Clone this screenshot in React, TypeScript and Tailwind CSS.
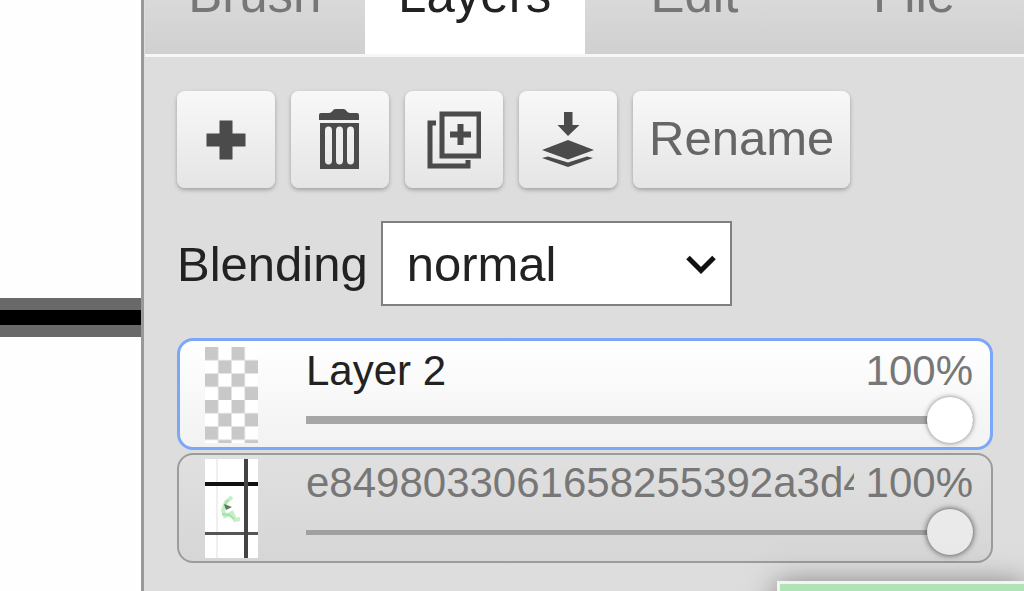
import { ReactNode, useState } from "react";

type Layer = {
  id: number;
  name: string;
  opacity: number;
  thumb: ReactNode;
}

const tabs = ["Brush", "Layers", "Edit", "File"];

const AddIcon = () => (
  <svg width="40" height="40" viewBox="0 0 40 40" fill="#4b4b4b" aria-hidden="true">
    <path d="M13.5 0.5h13v13h13v13h-13v13h-13v-13h-13v-13h13z" />
  </svg>
)

const TrashIcon = () => (
  <svg width="42" height="62" viewBox="0 0 42 62" fill="#4b4b4b" aria-hidden="true">
    <path d="M0 6q0-2 2-2h8q2 0 3.500-2q1-2 3-2h8q2 0 3 2q1.500 2 3.500 2h7q2 0 2 2v5h-40z" />
    <path fillRule="evenodd" d="M1 14h39v46h-39zM9.500 17.500q-3.500 0-3.500 4v30q0 4 3.500 4t3.500-4v-30q0-4-3.500-4zM20.500 17.500q-3.500 0-3.500 4v30q0 4 3.500 4t3.500-4v-30q0-4-3.500-4zM31.500 17.500q-3.500 0-3.500 4v30q0 4 3.500 4t3.500-4v-30q0-4-3.500-4z" />
  </svg>
)

const DuplicateIcon = () => (
  <svg width="54" height="58" viewBox="0 0 54 58" fill="none" stroke="#4b4b4b" aria-hidden="true">
    <path d="M15 3h37v42h-37z" strokeWidth="5" />
    <path d="M9 12h-6v43h38v-6" strokeWidth="5" />
    <path d="M33.500 13v21M23 23.500h21" strokeWidth="6" />
  </svg>
)

const MergeIcon = () => (
  <svg width="54" height="56" viewBox="0 0 54 56" fill="#4b4b4b" aria-hidden="true">
    <path d="M23 0h8.500v13h7l-11.500 11l-10.500-11h6.500z" />
    <path d="M27 28l26 10l-26 9.500l-26-9.500z" />
    <path d="M1 46l6-1.500l20 6l19-6l6 1.500l-25 9z" />
  </svg>
)

const EmptyThumb = () => (
  <svg width="53" height="96" viewBox="0 0 53 96" className="shrink-0" aria-hidden="true">
    <defs>
      <pattern id="checker" width="26.5" height="26.5" patternUnits="userSpaceOnUse">
        <path d="M0 0h26.500v26.500h-26.500z" fill="#fff" />
        <path d="M0 0h13.250v13.250h-13.250zM13.250 13.250h13.250v13.250h-13.250z" fill="#c8c8c8" />
      </pattern>
    </defs>
    <path d="M0 0h53v96h-53z" fill="url(#checker)" />
  </svg>
)

const DrawingThumb = () => (
  <svg width="53" height="99" viewBox="0 0 53 99" className="shrink-0" fill="none" aria-hidden="true">
    <path d="M0 0h53v99h-53z" fill="#fff" />
    <path d="M12 0v99" stroke="#efefef" strokeWidth="2" />
    <path d="M0 25h53" stroke="#111" strokeWidth="4" />
    <path d="M0 74.500h53" stroke="#555" strokeWidth="3" />
    <path d="M41 0v99" stroke="#444" strokeWidth="4" />
    <path d="M27 38l-6 5l-3 8l2 6l7-3l3 7l5-1" stroke="#c4efc8" strokeWidth="4" />
    <path d="M17 55l7 1l5 4M23 41l-4 6" stroke="#a3e2aa" strokeWidth="2" />
    <path d="M19 45l8 3l-6 3z" fill="#5d7a5e" />
  </svg>
)

const layers: Layer[] = [
  { id: 2, name: "Layer 2", opacity: 100, thumb: <EmptyThumb /> },
  { id: 1, name: "e8498033061658255392a3d4", opacity: 100, thumb: <DrawingThumb /> },
];

const ToolButton = ({ label, children }: { label: string, children: ReactNode }) => (
  <button
    aria-label={label}
    className="flex h-[97px] min-w-[98px] items-center justify-center rounded-lg bg-linear-to-b from-[#f8f8f8] to-[#e5e5e5] text-[49px] leading-[56px] text-[#666] shadow-[0_2px_4px_rgba(0,0,0,0.28)]"
  >
    {children}
  </button>
)

const LayerRow = ({ layer, active, onSelect }: { layer: Layer, active: boolean, onSelect: () => void }) => {
  const [opacity, setOpacity] = useState(layer.opacity);

  const box = active
    ? "border-3 border-[#7ba7f8] bg-linear-to-b from-white to-[#f2f2f2] pt-[6px] pb-[2px] pl-[25px] pr-[17px]"
    : "border-2 border-[#9c9c9c] bg-linear-to-b from-[#e0e0e0] to-[#d6d6d6] pt-[4px] pb-[3px] pl-[26px] pr-[18px]";
  const range = active
    ? "[&::-webkit-slider-runnable-track]:bg-[linear-gradient(#a6a6a6,#a6a6a6)] [&::-webkit-slider-runnable-track]:bg-[length:100%_8px] [&::-webkit-slider-thumb]:bg-white [&::-webkit-slider-thumb]:shadow-[0_0_5px_rgba(0,0,0,0.5)]"
    : "[&::-webkit-slider-runnable-track]:bg-[linear-gradient(#a0a0a0,#a0a0a0)] [&::-webkit-slider-runnable-track]:bg-[length:100%_5px] [&::-webkit-slider-thumb]:bg-[#eaeaea] [&::-webkit-slider-thumb]:shadow-[0_0_6px_rgba(0,0,0,0.7)]";

  return (
    <li onClick={onSelect} className={`flex items-start gap-12 rounded-2xl ${box}`}>
      {layer.thumb}
      <div className="min-w-0 flex-1">
        <div className="flex justify-between gap-3 text-[42px] leading-[48px]">
          <span className={`min-w-0 overflow-hidden whitespace-nowrap ${active ? "text-[#222]" : "text-[#777]"}`}>{layer.name}</span>
          <span className="text-[#777]">{opacity}%</span>
        </div>
        <input
          type="range"
          aria-label={`Opacity of ${layer.name}`}
          value={opacity}
          onChange={(e) => setOpacity(Number(e.target.value))}
          className={`block h-[50px] w-full appearance-none bg-transparent [&::-webkit-slider-runnable-track]:h-[46px] [&::-webkit-slider-runnable-track]:bg-center [&::-webkit-slider-runnable-track]:bg-no-repeat [&::-webkit-slider-thumb]:size-[46px] [&::-webkit-slider-thumb]:appearance-none [&::-webkit-slider-thumb]:rounded-full ${range}`}
        />
      </div>
    </li>
  );
}

const App = () => {
  const [tab, setTab] = useState("Layers");
  const [activeLayer, setActiveLayer] = useState(2);

  return (
    <div className="relative flex min-h-screen overflow-hidden bg-white font-['Liberation_Sans',Arial,sans-serif]">
      <main className="w-[141px] shrink-0 bg-[#fefefe] pt-[298px]">
        <div className="h-[39px] border-y-12 border-[#696969] bg-black"></div>
      </main>

      <aside className="min-w-0 flex-1 border-l-3 border-[#999] bg-[#ddd]">
        <nav className="-mt-[64px] ml-px flex border-b-3 border-[#f6f6f6] bg-linear-to-b from-[#e4e4e4] to-[#d0d0d0]">
          {tabs.map((name) => (
            <button
              key={name}
              onClick={() => setTab(name)}
              className={`h-[118px] flex-1 text-[51px] leading-[56px] ${name === tab ? "bg-white text-[#222]" : "text-[#777]"}`}
            >
              {name}
            </button>
          ))}
        </nav>

        <div className="pt-[34px] pr-[31px] pl-[33px]">
          <div className="flex gap-4">
            <ToolButton label="New layer"><AddIcon /></ToolButton>
            <ToolButton label="Remove layer"><TrashIcon /></ToolButton>
            <ToolButton label="Duplicate layer"><DuplicateIcon /></ToolButton>
            <ToolButton label="Merge with layer below"><MergeIcon /></ToolButton>
            <ToolButton label="Rename"><span className="px-4 pb-[3px]">Rename</span></ToolButton>
          </div>

          <div className="mt-[33px] flex items-center gap-[13px] text-[49px] leading-[56px] text-[#222]">
            <label htmlFor="blending">Blending</label>
            <div className="relative w-[351px]">
              <select id="blending" className="block h-[85px] w-full appearance-none border-2 border-[#808080] bg-white pl-6">
                <option>normal</option>
                <option>multiply</option>
                <option>screen</option>
              </select>
              <svg width="30" height="20" viewBox="0 0 30 20" className="pointer-events-none absolute top-[34px] right-4" fill="none" stroke="#111" strokeWidth="5" aria-hidden="true">
                <path d="M2 2.500l13 13l13-13" />
              </svg>
            </div>
          </div>

          <ul className="mt-8 flex flex-col gap-[3px]">
            {layers.map((layer) => (
              <LayerRow
                key={layer.id}
                layer={layer}
                active={layer.id === activeLayer}
                onSelect={() => setActiveLayer(layer.id)}
              />
            ))}
          </ul>
        </div>
      </aside>

      {/* preview popup, mostly below the fold */}
      <div className="absolute top-[581px] right-0 left-[777px] h-24 border-t-3 border-l-3 border-[#f4f4f4] bg-[#b0e3b5] shadow-[0_4px_28px_rgba(0,0,0,0.5)]"></div>
    </div>
  );
}

export default App;
